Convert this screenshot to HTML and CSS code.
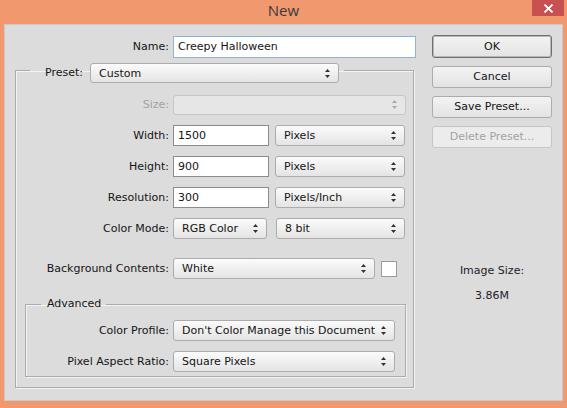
FILE: index.html
```html
<!DOCTYPE html>
<html>
<head>
<meta charset="utf-8">
<title>New</title>
<link rel="stylesheet" href="styles.css">
</head>
<body>
<div class="window">
  <div class="titlebar">
    <div class="title">New</div>
    <div class="close"><svg width="11" height="9" viewBox="0 0 11 9"><path d="M1.5 0.5 L9.5 8.5 M9.5 0.5 L1.5 8.5" stroke="#fff" stroke-width="1.8"/></svg></div>
  </div>
  <div class="client">
    <div class="left">
      <div class="name-row">
        <span class="lbl lbl-name">Name:</span>
        <div class="input name-input">Creepy Halloween</div>
      </div>
      <fieldset class="group outer">
        <legend class="legend-preset">
          <span class="lbl-inline">Preset:</span>
          <div class="select w-preset"><span>Custom</span><svg class="arr" width="5" height="9" viewBox="0 0 5 9"><path d="M2.5 0 L5 3 L0 3 Z M0 6 L5 6 L2.5 9 Z" fill="#333"/></svg></div>
        </legend>
        <div class="row r-size">
          <span class="lbl lbl-o disabled">Size:</span>
          <div class="select disabled-sel w-size"><span></span><svg class="arr" width="5" height="9" viewBox="0 0 5 9"><path d="M2.5 0 L5 3 L0 3 Z M0 6 L5 6 L2.5 9 Z" fill="#a8a8a8"/></svg></div>
        </div>
        <div class="row">
          <span class="lbl lbl-o">Width:</span>
          <div class="input w-num">1500</div>
          <div class="select w-unit"><span>Pixels</span><svg class="arr" width="5" height="9" viewBox="0 0 5 9"><path d="M2.5 0 L5 3 L0 3 Z M0 6 L5 6 L2.5 9 Z" fill="#333"/></svg></div>
        </div>
        <div class="row">
          <span class="lbl lbl-o">Height:</span>
          <div class="input w-num">900</div>
          <div class="select w-unit"><span>Pixels</span><svg class="arr" width="5" height="9" viewBox="0 0 5 9"><path d="M2.5 0 L5 3 L0 3 Z M0 6 L5 6 L2.5 9 Z" fill="#333"/></svg></div>
        </div>
        <div class="row">
          <span class="lbl lbl-o">Resolution:</span>
          <div class="input w-num">300</div>
          <div class="select w-unit"><span>Pixels/Inch</span><svg class="arr" width="5" height="9" viewBox="0 0 5 9"><path d="M2.5 0 L5 3 L0 3 Z M0 6 L5 6 L2.5 9 Z" fill="#333"/></svg></div>
        </div>
        <div class="row">
          <span class="lbl lbl-o">Color Mode:</span>
          <div class="select w-mode"><span>RGB Color</span><svg class="arr" width="5" height="9" viewBox="0 0 5 9"><path d="M2.5 0 L5 3 L0 3 Z M0 6 L5 6 L2.5 9 Z" fill="#333"/></svg></div>
          <div class="select w-bit"><span>8 bit</span><svg class="arr" width="5" height="9" viewBox="0 0 5 9"><path d="M2.5 0 L5 3 L0 3 Z M0 6 L5 6 L2.5 9 Z" fill="#333"/></svg></div>
        </div>
        <div class="row r-bg">
          <span class="lbl lbl-o">Background Contents:</span>
          <div class="select w-bg"><span>White</span><svg class="arr" width="5" height="9" viewBox="0 0 5 9"><path d="M2.5 0 L5 3 L0 3 Z M0 6 L5 6 L2.5 9 Z" fill="#333"/></svg></div>
          <div class="swatch"></div>
        </div>
        <fieldset class="group inner">
          <legend class="legend-adv">Advanced</legend>
          <div class="row r-prof">
            <span class="lbl lbl-i">Color Profile:</span>
            <div class="select w-prof"><span>Don't Color Manage this Document</span><svg class="arr" width="5" height="9" viewBox="0 0 5 9"><path d="M2.5 0 L5 3 L0 3 Z M0 6 L5 6 L2.5 9 Z" fill="#333"/></svg></div>
          </div>
          <div class="row">
            <span class="lbl lbl-i">Pixel Aspect Ratio:</span>
            <div class="select w-prof"><span>Square Pixels</span><svg class="arr" width="5" height="9" viewBox="0 0 5 9"><path d="M2.5 0 L5 3 L0 3 Z M0 6 L5 6 L2.5 9 Z" fill="#333"/></svg></div>
          </div>
        </fieldset>
      </fieldset>
    </div>
    <div class="right">
      <div class="btn btn-ok">OK</div>
      <div class="btn">Cancel</div>
      <div class="btn">Save Preset...</div>
      <div class="btn btn-disabled">Delete Preset...</div>
      <div class="info">
        <div class="info-label">Image Size:</div>
        <div class="info-value">3.86M</div>
      </div>
    </div>
  </div>
</div>
</body>
</html>
```

FILE: styles.css
```css
* { box-sizing: border-box; }
html, body { margin: 0; padding: 0; }
body {
  background: #f1986f;
  font-family: "DejaVu Sans", Verdana, sans-serif;
  font-size: 11px;
  color: #141414;
}
.window {
  width: 567px;
  height: 408px;
  display: flex;
  flex-direction: column;
  background: #f1986f;
}
.titlebar {
  height: 24px;
  display: grid;
  grid-template-columns: 1fr auto 1fr;
  align-items: start;
}
.title {
  grid-column: 2;
  font-family: "Open Sans", "Noto Sans", sans-serif;
  font-size: 15px;
  line-height: 21px;
  color: #3a3a3a;
}
.close {
  grid-column: 3;
  justify-self: end;
  width: 32px;
  height: 16px;
  margin-right: 3px;
  background: #c75050;
  display: flex;
  align-items: center;
  justify-content: center;
}
.client {
  margin: 0 4px 7px 4px;
  flex: 1;
  background: #dcdcdc;
  border: 1px solid #c9c9c9;
  display: flex;
  padding: 11px 0 0 10px;
}
.left {
  width: 401px;
  display: flex;
  flex-direction: column;
}
.name-row {
  display: flex;
  align-items: center;
  height: 22px;
}
.lbl {
  text-align: right;
  white-space: nowrap;
  flex: none;
  margin-right: 4px;
  line-height: 14px;
}
.lbl-name { width: 154px; }
.lbl-o { width: 153px; }
.lbl-i { width: 143px; }
.disabled { color: #a3a3a3; }
.input {
  height: 21px;
  background: #fff;
  border: 1px solid #8b8b8b;
  padding: 0 4px;
  line-height: 19px;
  flex: none;
  white-space: nowrap;
}
.name-input {
  width: 243px;
  height: 22px;
  line-height: 20px;
  border-color: #8fb2dc;
}
.group {
  margin: 0;
  padding: 0;
  min-width: 0;
  border: 1px solid #acacac;
  box-shadow: inset 1px 1px 0 #f3f3f3, 1px 1px 0 #f3f3f3;
}
.outer {
  width: 399px;
  margin-top: 5px;
  padding-bottom: 0;
}
.legend-preset {
  height: 14px;
  margin-left: 14px;
  padding: 0 5px 0 15px;
  display: flex;
  align-items: flex-start;
  overflow: visible;
}
.lbl-inline {
  line-height: 20px;
  margin-right: 7px;
}
.row {
  display: flex;
  align-items: center;
  height: 21px;
  margin-top: 10px;
}
.r-size { margin-top: 17px; }
.r-bg { margin-top: 19px; }
.select {
  height: 21px;
  flex: none;
  display: flex;
  align-items: center;
  justify-content: space-between;
  padding: 0 8px 0 8px;
  border: 1px solid #acacac;
  border-radius: 3px;
  background: linear-gradient(#fbfbfb, #e4e4e4);
  white-space: nowrap;
}
.legend-preset .select { height: 20px; }
.disabled-sel {
  background: #e6e6e6;
  border-color: #c6c6c6;
  height: 20px;
}
.arr { flex: none; }
.w-preset { width: 249px; }
.w-size { width: 233px; }
.w-num { width: 96px; margin-right: 6px; }
.w-unit { width: 130px; }
.w-mode { width: 94px; margin-right: 9px; }
.w-bit { width: 129px; }
.w-bg { width: 202px; margin-right: 6px; }
.w-prof { width: 222px; }
.swatch {
  width: 16px;
  height: 16px;
  background: #fff;
  border: 1px solid #9a9a9a;
  flex: none;
}
.inner {
  width: 381px;
  margin: 18px 0 10px 9px;
  padding-bottom: 4px;
}
.legend-adv {
  margin-left: 15px;
  padding: 0 5px 0 6px;
  line-height: 14px;
  height: 14px;
}
.r-prof { margin-top: 9px; }
.right {
  width: 120px;
  margin-left: 16px;
  display: flex;
  flex-direction: column;
}
.btn {
  height: 22px;
  margin-top: 8px;
  border: 1px solid #acacac;
  border-radius: 3px;
  background: linear-gradient(#f3f3f3, #e3e3e3);
  display: flex;
  align-items: center;
  justify-content: center;
  line-height: 14px;
}
.btn-ok {
  height: 23px;
  margin-top: -1px;
  border: 1px solid #6f6f6f;
  box-shadow: inset 0 0 0 1px #b8b8b8;
}
.btn-disabled {
  color: #a3a3a3;
  border-color: #c6c6c6;
  background: #ececec;
}
.info {
  margin-top: 116px;
  text-align: center;
  line-height: 14px;
  color: #1c1c2c;
}
.info-value { margin-top: 11px; }
```
